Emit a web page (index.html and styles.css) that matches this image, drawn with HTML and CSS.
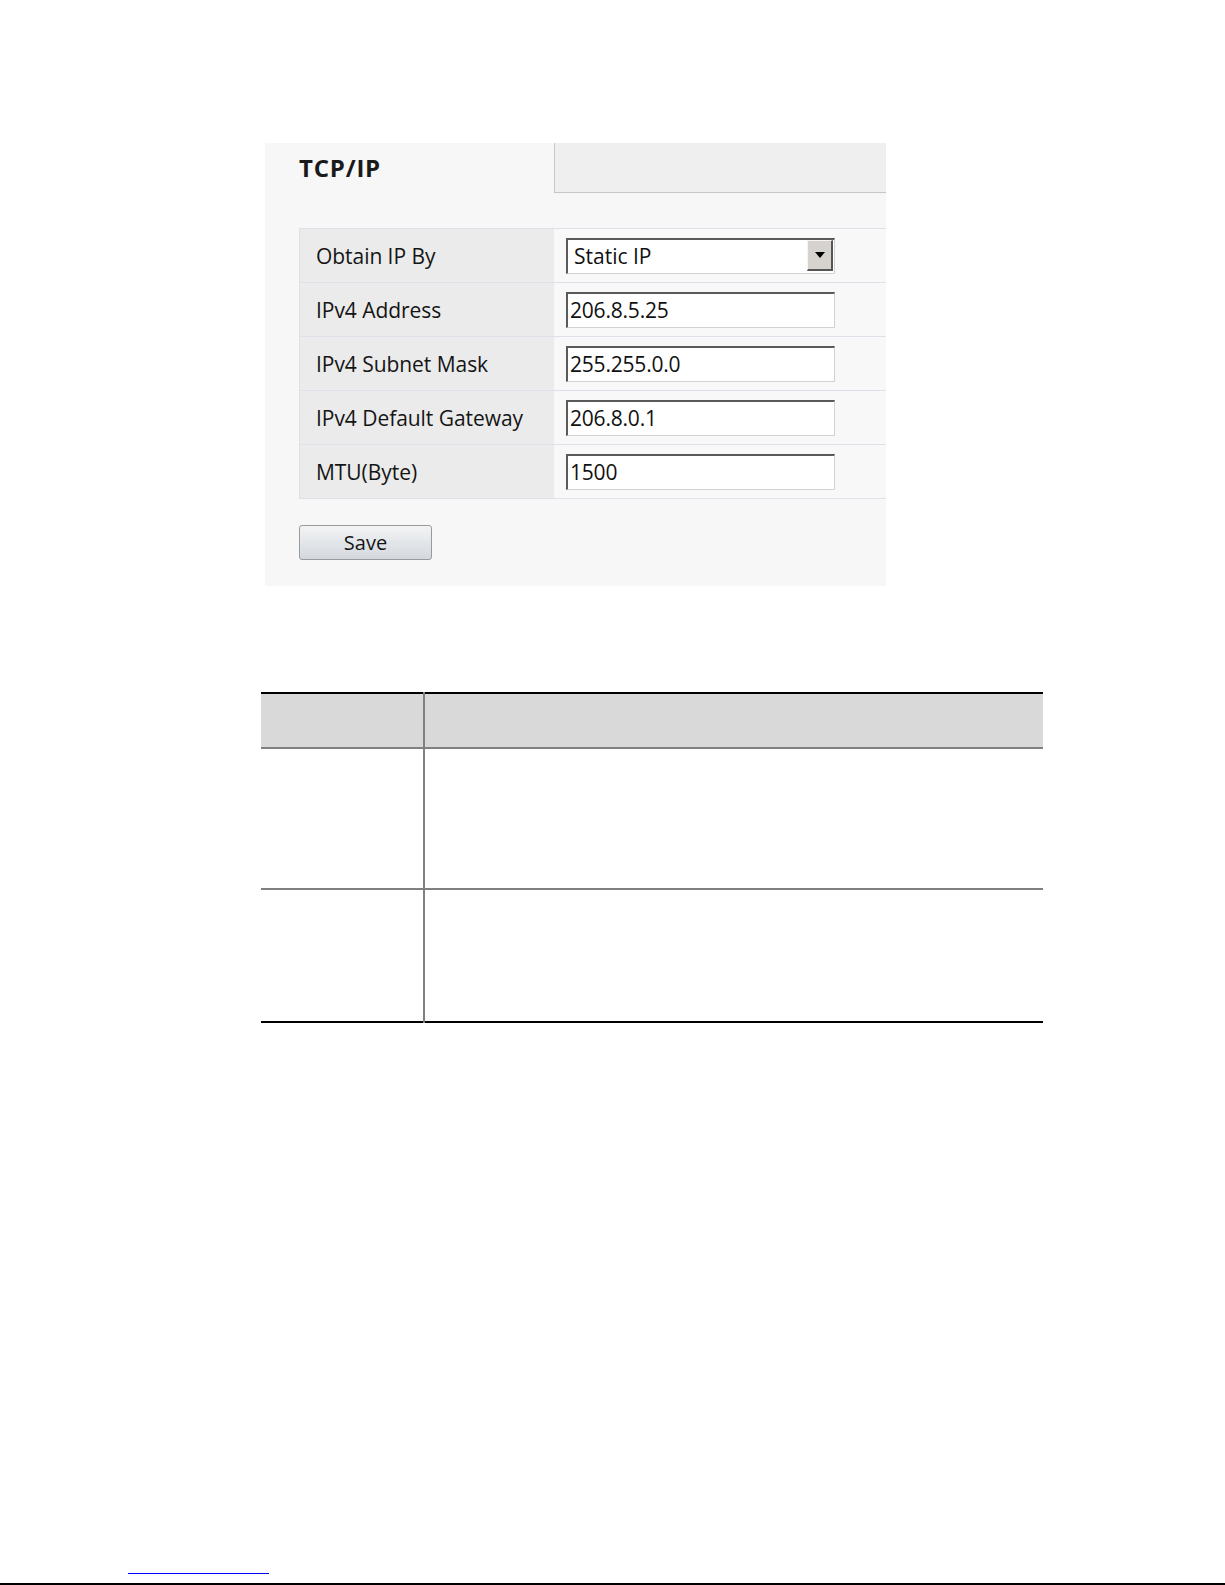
FILE: index.html
```html
<!DOCTYPE html>
<html>
<head>
<meta charset="utf-8">
<link rel="stylesheet" href="styles.css">
</head>
<body>
<div class="page">
  <section class="panel">
    <div class="tabs">
      <div class="tab-active">TCP/IP</div>
      <div class="tab-rest"></div>
    </div>
    <div class="form">
      <div class="row">
        <div class="label">Obtain IP By</div>
        <div class="value">
          <div class="select">
            <span class="select-text">Static IP</span>
            <span class="select-btn"><span class="arrow"></span></span>
          </div>
        </div>
      </div>
      <div class="row">
        <div class="label">IPv4 Address</div>
        <div class="value"><div class="input">206.8.5.25</div></div>
      </div>
      <div class="row">
        <div class="label">IPv4 Subnet Mask</div>
        <div class="value"><div class="input">255.255.0.0</div></div>
      </div>
      <div class="row">
        <div class="label">IPv4 Default Gateway</div>
        <div class="value"><div class="input">206.8.0.1</div></div>
      </div>
      <div class="row">
        <div class="label">MTU(Byte)</div>
        <div class="value"><div class="input">1500</div></div>
      </div>
    </div>
    <button class="save">Save</button>
  </section>

  <table class="doc-table">
    <thead>
      <tr><th class="c1"></th><th class="c2"></th></tr>
    </thead>
    <tbody>
      <tr class="r1"><td class="c1"></td><td class="c2"></td></tr>
      <tr class="r2"><td class="c1"></td><td class="c2"></td></tr>
    </tbody>
  </table>

  <div class="footer">
    <span class="link-line"></span>
  </div>
  <div class="page-edge"></div>
</div>
</body>
</html>
```

FILE: styles.css
```css
* { box-sizing: border-box; }
html, body { margin: 0; padding: 0; background: #ffffff; }
body { font-family: "Open Sans", "Noto Sans", sans-serif; color: #1e1e1e; }

.page { width: 1225px; height: 1585px; overflow: hidden; display: flex; flex-direction: column; }

.panel {
  margin-top: 143px;
  margin-left: 265px;
  width: 621px;
  height: 443px;
  background: #f7f7f7;
  display: flex;
  flex-direction: column;
}

.tabs { display: flex; height: 50px; }
.tab-active {
  width: 289px;
  padding-left: 34px;
  font-size: 24px;
  font-weight: 700;
  line-height: 50px;
  color: #1a1a1a;
  letter-spacing: 0.8px;
}
.tab-rest {
  flex: 1;
  background: #efefef;
  border-left: 1px solid #c6c6c6;
  border-bottom: 1px solid #c6c6c6;
}

.form {
  margin-top: 35px;
  margin-left: 34px;
  border-top: 1px solid #dde2e8;
  border-left: 1px solid #dde2e8;
}
.row {
  display: grid;
  grid-template-columns: 254px 1fr;
  height: 54px;
  border-bottom: 1px solid #dde2e8;
}
.label {
  background: #ebebeb;
  padding-left: 16px;
  padding-top: 1px;
  font-size: 21px;
  line-height: 52px;
  color: #151515;
  letter-spacing: -0.05px;
}
.value {
  background: #f8f8f8;
  padding-left: 12px;
  display: flex;
  align-items: center;
}
.input, .select {
  width: 269px;
  height: 36px;
  background: #ffffff;
  border-top: 2px solid #5a5a5a;
  border-left: 2px solid #5a5a5a;
  border-right: 1px solid #d2d2d2;
  border-bottom: 1px solid #d2d2d2;
  font-size: 21px;
  line-height: 32px;
  padding-left: 2px;
  color: #111;
  letter-spacing: -0.2px;
}
.select { display: flex; padding-left: 0; }
.select-text { flex: 1; padding-left: 6px; letter-spacing: 0; }
.select-btn {
  width: 26px;
  height: 31px;
  margin: 0 1px 1px 0;
  background: #d6d3ce;
  border-top: 1px solid #f4f4f4;
  border-left: 1px solid #f4f4f4;
  border-right: 2px solid #555;
  border-bottom: 2px solid #555;
  display: flex;
  align-items: center;
  justify-content: center;
}
.arrow {
  width: 0; height: 0;
  border-left: 5px solid transparent;
  border-right: 5px solid transparent;
  border-top: 6px solid #000;
}

.save {
  margin-top: 26px;
  margin-left: 34px;
  width: 133px;
  height: 35px;
  border: 1px solid #9a9a9a;
  border-radius: 3px;
  background: linear-gradient(#f3f4f5, #e3e6e9 50%, #d4d8dd);
  font-family: "Open Sans", "Noto Sans", sans-serif;
  font-size: 20px;
  color: #151515;
  padding: 0;
  line-height: 31px;
}

.doc-table {
  margin-top: 106px;
  margin-left: 261px;
  width: 782px;
  border-collapse: collapse;
  border-top: 2px solid #000;
  border-bottom: 2px solid #000;
}
.doc-table th, .doc-table td { padding: 0; }
.doc-table thead tr { height: 55px; background: #d9d9d9; }
.doc-table .c1 { width: 163px; }
.doc-table .c2 { border-left: 2px solid #808080; }
.doc-table thead th { border-bottom: 2px solid #808080; }
.doc-table .r1 { height: 141px; }
.doc-table .r1 td { border-bottom: 2px solid #808080; }
.doc-table .r2 { height: 133px; }

.footer {
  margin-top: auto;
  height: 10px;
  padding-left: 128px;
}
.link-line {
  display: block;
  width: 141px;
  height: 1px;
  background: #0000ff;
}
.page-edge { height: 2px; background: #000; }
```
